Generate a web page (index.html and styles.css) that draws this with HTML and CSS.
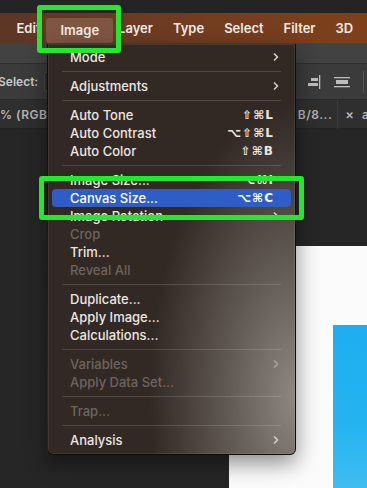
FILE: index.html
```html
<!DOCTYPE html>
<html lang="en">
<head>
    <meta charset="UTF-8">
    <meta name="viewport" content="width=device-width, initial-scale=1.0">
    <title>Image menu</title>
    <link rel="stylesheet" href="styles.css">
</head>
<body>
    <div class="app">
        <div class="topstrip"></div>
        <div class="menubar">
            <span class="mb-item first">Edit</span>
            <span class="mb-item active">Image</span>
            <span class="mb-item">Layer</span>
            <span class="mb-item">Type</span>
            <span class="mb-item">Select</span>
            <span class="mb-item">Filter</span>
            <span class="mb-item">3D</span>
        </div>
        <div class="options">
            <div class="options__top"></div>
            <div class="options__row">
                <span class="opt-label">Select:</span>
                <span class="opt-input"></span>
                <div class="opt-icons">
                    <svg class="opt-icon" width="14" height="16" viewBox="0 0 14 16">
                        <rect x="4" y="4" width="7" height="3" fill="#bdbdbd"/>
                        <rect x="1" y="9" width="10" height="3" fill="#bdbdbd"/>
                        <rect x="12" y="1" width="1.3" height="14" fill="#bdbdbd"/>
                    </svg>
                    <svg class="opt-icon" width="16" height="16" viewBox="0 0 16 16">
                        <rect x="0" y="3" width="16" height="1.3" fill="#bdbdbd"/>
                        <rect x="2" y="6" width="12" height="4" fill="#bdbdbd"/>
                        <rect x="0" y="12" width="16" height="1.3" fill="#bdbdbd"/>
                    </svg>
                    <span class="opt-sep"></span>
                </div>
            </div>
        </div>
        <div class="tabs">
            <span class="tab-text">% (RGB/8</span>
            <div class="tabs__right">
                <span class="tab-text">B/8...</span>
                <span class="tab-sep"></span>
                <span class="tab-close">×</span>
                <span class="tab-text">al</span>
            </div>
        </div>
        <div class="workspace">
            <div class="canvas">
                <div class="canvas__art"></div>
            </div>
        </div>

        <div class="menu">
            <div class="item sub"><span>Mode</span><svg class="chev" width="6" height="10" viewBox="0 0 6 10"><path d="M1 1.5l3.5 3.5-3.5 3.5" fill="none" stroke="#d6d1cc" stroke-width="1.5"/></svg></div>
            <div class="sep"></div>
            <div class="item sub"><span>Adjustments</span><svg class="chev" width="6" height="10" viewBox="0 0 6 10"><path d="M1 1.5l3.5 3.5-3.5 3.5" fill="none" stroke="#d6d1cc" stroke-width="1.5"/></svg></div>
            <div class="sep"></div>
            <div class="item"><span>Auto Tone</span><span class="key">⇧⌘L</span></div>
            <div class="item"><span>Auto Contrast</span><span class="key">⌥⇧⌘L</span></div>
            <div class="item"><span>Auto Color</span><span class="key">⇧⌘B</span></div>
            <div class="sep"></div>
            <div class="item"><span>Image Size...</span><span class="key">⌥⌘I</span></div>
            <div class="item selected"><span>Canvas Size...</span><span class="key">⌥⌘C</span></div>
            <div class="item sub"><span>Image Rotation</span><svg class="chev" width="6" height="10" viewBox="0 0 6 10"><path d="M1 1.5l3.5 3.5-3.5 3.5" fill="none" stroke="#d6d1cc" stroke-width="1.5"/></svg></div>
            <div class="item off"><span>Crop</span></div>
            <div class="item"><span>Trim...</span></div>
            <div class="item off"><span>Reveal All</span></div>
            <div class="sep"></div>
            <div class="item"><span>Duplicate...</span></div>
            <div class="item"><span>Apply Image...</span></div>
            <div class="item"><span>Calculations...</span></div>
            <div class="sep"></div>
            <div class="item off sub"><span>Variables</span><svg class="chev" width="6" height="10" viewBox="0 0 6 10"><path d="M1 1.5l3.5 3.5-3.5 3.5" fill="none" stroke="#aaa49f" stroke-width="1.5"/></svg></div>
            <div class="item off"><span>Apply Data Set...</span></div>
            <div class="sep"></div>
            <div class="item off"><span>Trap...</span></div>
            <div class="sep"></div>
            <div class="item sub"><span>Analysis</span><svg class="chev" width="6" height="10" viewBox="0 0 6 10"><path d="M1 1.5l3.5 3.5-3.5 3.5" fill="none" stroke="#d6d1cc" stroke-width="1.5"/></svg></div>
        </div>

        <!-- green call-out boxes drawn over the screenshot -->
        <div class="mark mark--menu"></div>
        <div class="mark mark--item"></div>
    </div>
</body>
</html>
```

FILE: styles.css
```css
*{
    box-sizing: border-box;
}
body{
    margin: 0;
    background-color: #262626;
    font-family: Inter, "Liberation Sans", sans-serif;
}
.app{
    position: relative;
    width: 367px;
    height: 488px;
    overflow: hidden;
    display: flex;
    flex-direction: column;
}
.topstrip{
    height: 13px;
    background-color: #242424;
}
.menubar{
    height: 30px;
    display: flex;
    align-items: center;
    background: linear-gradient(90deg, #5c3526 0%, #6e3c22 45%, #7f4019 100%);
    color: #f3ebe6;
    font-size: 13px;
    font-weight: 600;
    white-space: nowrap;
}
.mb-item{
    padding: 0 10px;
    line-height: 25px;
}
.mb-item.first{
    margin-left: 6.5px;
}
.mb-item.active{
    background-color: #7f5641;
    border-radius: 3px;
    padding: 0 14px;
    margin: 5px -5px 0 -4px;
    line-height: 25px;
    height: 25px;
}
.options__top{
    height: 21px;
    background-color: #424242;
    border-bottom: 1px solid #2f2f2f;
}
.options__row{
    height: 36px;
    display: flex;
    align-items: center;
    background-color: #3b3b3b;
    border-bottom: 1px solid #2a2a2a;
}
.opt-label{
    margin-left: -2px;
    color: #c9c9c9;
    font-size: 12px;
    font-weight: 600;
}
.opt-input{
    margin-left: 6px;
    width: 14px;
    height: 19px;
    background-color: #2e2e2e;
    border: 1px solid #4a4a4a;
    border-radius: 2px;
}
.opt-icons{
    margin-left: auto;
    display: flex;
    align-items: center;
    gap: 13px;
}
.opt-icon{
    display: block;
}
.opt-sep{
    width: 1px;
    height: 22px;
    background-color: #555;
    margin-right: 3px;
}
.tabs{
    height: 29px;
    display: flex;
    align-items: center;
    background-color: #2f2f2f;
    border-bottom: 1px solid #232323;
    color: #b4b4b4;
    font-size: 12px;
    font-weight: 600;
    white-space: nowrap;
}
.tab-text{
    letter-spacing: 0.5px;
}
.tabs__right{
    margin-left: auto;
    display: flex;
    align-items: center;
    margin-right: -6px;
}
.tab-sep{
    width: 1px;
    height: 29px;
    background-color: #3c3c3c;
    margin: 0 7px 0 5px;
}
.tab-close{
    margin-right: 8px;
    font-size: 13px;
}
.workspace{
    flex: 1;
    padding: 117px 0 0 229px;
    background-color: #262626;
}
.canvas{
    height: 100%;
    background-color: #fbfbfb;
    padding: 79px 0 0 104px;
}
.canvas__art{
    height: 100%;
    background: linear-gradient(180deg, #1eaef0 0%, #25b3f0 60%, #3fbdf0 100%);
}

/* the open menu */
.menu{
    position: absolute;
    left: 47px;
    top: 44px;
    width: 249px;
    padding: 4px 4px 5px 4px;
    border: 1px solid rgba(0,0,0,0.7);
    border-top: none;
    border-radius: 0 0 6px 6px;
    background:
        radial-gradient(ellipse 145px 290px at 100% 86%, rgba(146,140,134,0.95), rgba(146,140,134,0.5) 45%, rgba(146,140,134,0) 100%),
        #322924;
    box-shadow: 0 8px 22px rgba(0,0,0,0.45), inset 0 0 0 1px rgba(255,255,255,0.08);
    color: #ebe6e2;
    font-size: 13px;
    font-weight: 500;
}
.item{
    height: 18px;
    display: flex;
    align-items: center;
    justify-content: space-between;
    padding: 0 17px 0 18px;
    white-space: nowrap;
    border-radius: 4px;
}
.item.sub{
    padding-right: 12px;
}
.item.off{
    color: rgba(235,230,226,0.32);
}
.item.selected{
    background-color: #2e5dc6;
    color: #fff;
}
.key{
    font-family: "DejaVu Sans", sans-serif;
    font-size: 12px;
    font-weight: 600;
    letter-spacing: 1px;
}
.chev{
    display: block;
}
.sep{
    height: 11px;
    margin: 0 10px;
    display: flex;
    align-items: center;
}
.sep::after{
    content: "";
    flex: 1;
    height: 1px;
    background-color: rgba(255,255,255,0.14);
}

.mark{
    position: absolute;
    border: 5px solid #24e82e;
    border-radius: 3px;
}
.mark--menu{
    left: 37px;
    top: 5px;
    width: 84px;
    height: 48px;
}
.mark--item{
    left: 39px;
    top: 176px;
    width: 265px;
    height: 44px;
}
```
